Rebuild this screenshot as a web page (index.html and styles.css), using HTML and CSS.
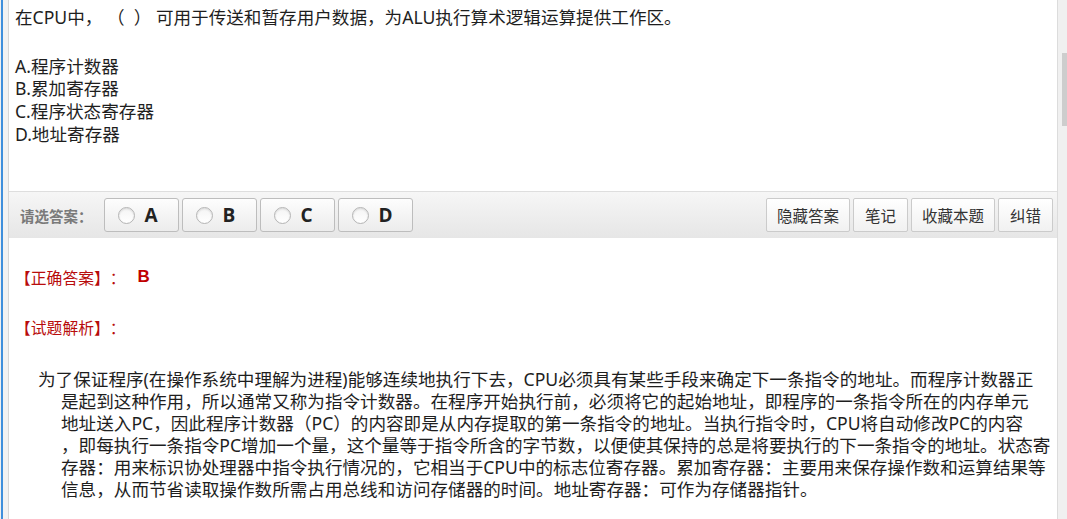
FILE: index.html
```html
<!DOCTYPE html>
<html lang="zh-CN">
<head>
    <meta charset="UTF-8">
    <meta name="viewport" content="width=device-width, initial-scale=1.0">
    <title>试题</title>
    <link rel="stylesheet" href="styles.css">
</head>
<body>
    <div class="window">
        <div class="edge"></div>

        <div class="panel">
            <div class="question">
                <p class="stem">在CPU中，&nbsp;（&nbsp;&nbsp;）&nbsp;可用于传送和暂存用户数据，为ALU执行算术逻辑运算提供工作区。</p>
                <div class="option">A.程序计数器</div>
                <div class="option">B.累加寄存器</div>
                <div class="option">C.程序状态寄存器</div>
                <div class="option">D.地址寄存器</div>
            </div>

            <div class="toolbar">
                <span class="label">请选答案：</span>
                <div class="choices">
                    <button class="btn-choice"><span class="radio"></span>A</button>
                    <button class="btn-choice"><span class="radio"></span>B</button>
                    <button class="btn-choice"><span class="radio"></span>C</button>
                    <button class="btn-choice"><span class="radio"></span>D</button>
                </div>
                <div class="tools">
                    <button class="btn-tool">隐藏答案</button>
                    <button class="btn-tool">笔记</button>
                    <button class="btn-tool">收藏本题</button>
                    <button class="btn-tool">纠错</button>
                </div>
            </div>

            <div class="answer">
                <div class="answer-row">
                    <span class="tag">【正确答案】：</span>
                    <span class="right-key">B</span>
                </div>
                <div class="answer-row analysis-title">
                    <span class="tag">【试题解析】：</span>
                </div>
                <p class="analysis">为了保证程序(在操作系统中理解为进程)能够连续地执行下去，CPU必须具有某些手段来确定下一条指令的地址。而程序计数器正<br>是起到这种作用，所以通常又称为指令计数器。在程序开始执行前，必须将它的起始地址，即程序的一条指令所在的内存单元<br>地址送入PC，因此程序计数器（PC）的内容即是从内存提取的第一条指令的地址。当执行指令时，CPU将自动修改PC的内容<br>，即每执行一条指令PC增加一个量，这个量等于指令所含的字节数，以便使其保持的总是将要执行的下一条指令的地址。状态寄<br>存器：用来标识协处理器中指令执行情况的，它相当于CPU中的标志位寄存器。累加寄存器：主要用来保存操作数和运算结果等<br>信息，从而节省读取操作数所需占用总线和访问存储器的时间。地址寄存器：可作为存储器指针。</p>
            </div>
        </div>

        <div class="scrollbar">
            <div class="thumb"></div>
        </div>
    </div>
</body>
</html>
```

FILE: styles.css
```css
* {
    margin: 0;
    padding: 0;
    box-sizing: border-box;
}

body {
    font-family: "Noto Sans", "Noto Sans CJK SC", sans-serif;
    background-color: #f0f0f0;
    color: #1e1e1e;
    height: 519px;
    overflow: hidden;
    text-spacing-trim: space-all;
}

.window {
    display: flex;
    height: 519px;
}

.edge {
    width: 7px;
    margin-left: 1px;
    border-left: 2px solid #3f8fdc;
    background-color: #f2f2f2;
}

.panel {
    flex: 1;
    background-color: white;
    border-left: 1px solid #d6d6d6;
    border-right: 1px solid #dcdcdc;
}

.scrollbar {
    width: 5px;
    margin-left: 4px;
    background-color: #f0f0f0;
}

.thumb {
    margin-top: 53px;
    height: 73px;
    background-color: #cdcdcd;
}

/* question */
.question {
    height: 191px;
    padding: 6px 6px 0;
    font-size: 17.6px;
    line-height: 22.7px;
}

.stem {
    margin-bottom: 26px;
}

/* toolbar */
.toolbar {
    display: flex;
    align-items: center;
    height: 47px;
    padding: 0 4px 0 11px;
    border-top: 1px solid #dedede;
    background: linear-gradient(#f6f6f6, #e6e6e6);
}

.label {
    font-size: 14.5px;
    font-weight: bold;
    color: #7a7a7a;
    margin-right: 11px;
}

.choices {
    display: flex;
    gap: 3px;
}

.btn-choice {
    display: flex;
    align-items: center;
    width: 75px;
    height: 34px;
    padding-left: 13px;
    border: 1px solid #bdbdbd;
    border-radius: 3px;
    background: linear-gradient(#fdfdfd, #ececec);
    font-family: "Open Sans", "Noto Sans", sans-serif;
    font-size: 19px;
    font-weight: bold;
    color: #222;
    cursor: pointer;
}

.radio {
    width: 17px;
    height: 17px;
    margin-right: 10px;
    border: 1px solid #b5b5b5;
    border-radius: 50%;
    background: linear-gradient(#f4f4f4, #ffffff);
    box-shadow: inset 0 1px 2px rgba(0,0,0,0.12);
}

.tools {
    display: flex;
    gap: 3px;
    margin-left: auto;
}

.btn-tool {
    min-width: 55px;
    height: 34px;
    padding: 0 10px;
    border: 1px solid #cbcbcb;
    border-radius: 2px;
    background: linear-gradient(#ffffff, #f1f1f1);
    font-family: "Noto Sans", "Noto Sans CJK SC", sans-serif;
    font-size: 15.5px;
    color: #333;
    cursor: pointer;
}

/* answer */
.answer {
    padding: 28px 6px 0;
}

.answer-row {
    display: flex;
    align-items: center;
    height: 22px;
}

.analysis-title {
    margin-top: 28px;
}

.tag {
    font-size: 15.8px;
    color: #b80c0c;
}

.right-key {
    margin-left: 12px;
    font-family: "Liberation Sans", sans-serif;
    font-size: 17px;
    font-weight: bold;
    color: #c00000;
}

.analysis {
    margin-top: 30px;
    padding-left: 46px;
    text-indent: -23px;
    font-size: 17.6px;
    line-height: 22px;
    white-space: nowrap;
}
```
